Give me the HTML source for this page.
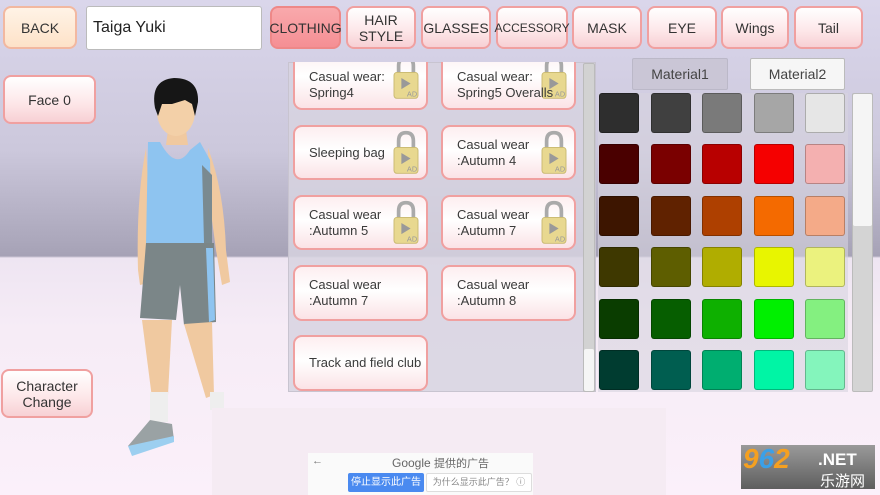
<!DOCTYPE html>
<html><head><meta charset="utf-8"><style>
*{margin:0;padding:0;box-sizing:border-box}
body{width:880px;height:495px;overflow:hidden;position:relative;font-family:"Liberation Sans","Noto Sans CJK SC",sans-serif;color:#333;
background:linear-gradient(#dad6eb 0px,#ccc8dc 150px,#a6a2b6 256px,#eee5f2 258px,#f6ecf6 330px,#fbf0fa 495px)}
.a{position:absolute}
.btn{position:absolute;border:2px solid #f0a0a0;border-radius:8px;background:linear-gradient(#fff 0%,#fde6e8 60%,#f7d0d4 100%);display:flex;align-items:center;justify-content:center;text-align:center;font-size:14px;line-height:16px;color:#333}
.tab{top:6px;height:43px;font-size:14px}
.cl{position:absolute;width:135px;border:2px solid #f0a0a0;border-radius:9px;background:linear-gradient(#fdeef0,#fff 45%,#fbe3e6);font-size:13px;line-height:16px;padding-left:14px;display:flex;align-items:center;color:#3a3a3a;white-space:nowrap}
.cl span{position:relative;z-index:2}
.sw{position:absolute;width:40px;height:40px;border-radius:3px;border:1px solid rgba(0,0,0,.25)}
.lock{position:absolute;right:6px;top:2px;width:28px;height:48px;z-index:1}
</style></head><body>
<div class="btn" style="left:3px;top:6px;width:74px;height:43px;background:linear-gradient(#fff3e6,#fde2c8);border-color:#f2b8a0">BACK</div>
<div class="a" style="left:86px;top:6px;width:176px;height:44px;background:#fff;border:1px solid #bbb;border-radius:3px;font-size:16px;line-height:42px;padding-left:6px;color:#222">Taiga Yuki</div>
<div class="btn tab" style="left:270px;width:71px;background:linear-gradient(#f9a9ac,#f58f94);border-color:#e88">CLOTHING</div>
<div class="btn tab" style="left:346px;width:70px">HAIR<br>STYLE</div>
<div class="btn tab" style="left:421px;width:70px">GLASSES</div>
<div class="btn tab" style="left:496px;width:72px;font-size:12px">ACCESSORY</div>
<div class="btn tab" style="left:572px;width:70px">MASK</div>
<div class="btn tab" style="left:647px;width:70px">EYE</div>
<div class="btn tab" style="left:721px;width:68px">Wings</div>
<div class="btn tab" style="left:794px;width:69px">Tail</div>
<div class="btn" style="left:3px;top:75px;width:93px;height:49px">Face 0</div>
<div class="btn" style="left:1px;top:369px;width:92px;height:49px">Character<br>Change</div>

<svg class="a" style="left:100px;top:70px" width="140" height="395" viewBox="100 70 140 395">
<path d="M168 130 L186 130 L188 145 L166 145Z" fill="#f0c9a0"/>
<path d="M146 148 Q136 200 138 270 L140 285 L148 283 L150 215 Z" fill="#f0c9a0"/>
<path d="M208 148 Q224 190 226 250 L230 282 L222 285 L216 250 L210 205Z" fill="#f0c9a0"/>
<path d="M148 142 L160 142 Q176 172 190 150 L200 142 L210 160 L212 243 L146 244 Z" fill="#8ec4f0"/>
<path d="M202 165 L212 175 L212 243 L204 243Z" fill="#7a8a90"/>
<path d="M146 243 L214 243 L216 322 L184 325 L180 285 L176 320 L140 318 Z" fill="#7b8688"/>
<path d="M206 248 L213 248 L215 320 L209 322Z" fill="#8ec4f0"/>
<path d="M142 320 L172 320 L168 395 L152 398Z" fill="#f0c9a0"/>
<path d="M184 324 L212 322 L214 395 L206 398Z" fill="#f0c9a0"/>
<rect x="150" y="392" width="18" height="30" fill="#eee"/>
<rect x="210" y="392" width="14" height="18" fill="#eee"/>
<path d="M150 420 L172 424 L174 440 L133 452 L128 446Z" fill="#9aa2a4"/>
<path d="M128 446 L174 436 L174 442 L132 456Z" fill="#9ccff0"/>
<ellipse cx="176" cy="112" rx="19" ry="24" fill="#f3d0a8"/>
<path d="M155 108 Q150 80 174 78 Q199 78 198 102 L195 116 L192 104 L185 100 L172 104 L162 104 L158 116Z" fill="#161616"/>
</svg>

<div class="a" style="left:288px;top:62px;width:308px;height:330px;background:rgba(215,212,224,.85);border:1px solid #c8c4d0"></div>
<div class="a" style="left:583px;top:63px;width:12px;height:329px;background:#d2d2d2;border:1px solid #bbb;border-radius:2px"></div>
<div class="a" style="left:584px;top:349px;width:10px;height:42px;background:#f5f5f5;border-radius:2px"></div>
<div class="a" style="left:288px;top:62px;width:296px;height:330px;overflow:hidden">
 <div class="cl" style="left:5px;top:-14px;height:62px;padding-top:12px"><span>Casual wear:<br>Spring4</span><svg class="lock" style="top:4px" viewBox="0 0 30 52"><path d="M7 22 V13 Q7 4 15 4 Q23 4 23 13 V22" fill="none" stroke="#aaa" stroke-width="4"/><rect x="2" y="20" width="26" height="28" rx="3" fill="#e8d890" stroke="#c8b870"/><path d="M10 26 L20 32 L10 38Z" fill="#999"/><text x="16" y="46" font-size="8" fill="#999">AD</text></svg></div>
 <div class="cl" style="left:153px;top:-14px;height:62px;padding-top:12px"><span>Casual wear:<br>Spring5 Overalls</span><svg class="lock" style="top:4px" viewBox="0 0 30 52"><path d="M7 22 V13 Q7 4 15 4 Q23 4 23 13 V22" fill="none" stroke="#aaa" stroke-width="4"/><rect x="2" y="20" width="26" height="28" rx="3" fill="#e8d890" stroke="#c8b870"/><path d="M10 26 L20 32 L10 38Z" fill="#999"/><text x="16" y="46" font-size="8" fill="#999">AD</text></svg></div>
 <div class="cl" style="left:5px;top:63px;height:55px"><span>Sleeping bag</span><svg class="lock" viewBox="0 0 30 52"><path d="M7 22 V13 Q7 4 15 4 Q23 4 23 13 V22" fill="none" stroke="#aaa" stroke-width="4"/><rect x="2" y="20" width="26" height="28" rx="3" fill="#e8d890" stroke="#c8b870"/><path d="M10 26 L20 32 L10 38Z" fill="#999"/><text x="16" y="46" font-size="8" fill="#999">AD</text></svg></div>
 <div class="cl" style="left:153px;top:63px;height:55px"><span>Casual wear<br>:Autumn 4</span><svg class="lock" viewBox="0 0 30 52"><path d="M7 22 V13 Q7 4 15 4 Q23 4 23 13 V22" fill="none" stroke="#aaa" stroke-width="4"/><rect x="2" y="20" width="26" height="28" rx="3" fill="#e8d890" stroke="#c8b870"/><path d="M10 26 L20 32 L10 38Z" fill="#999"/><text x="16" y="46" font-size="8" fill="#999">AD</text></svg></div>
 <div class="cl" style="left:5px;top:133px;height:55px"><span>Casual wear<br>:Autumn 5</span><svg class="lock" viewBox="0 0 30 52"><path d="M7 22 V13 Q7 4 15 4 Q23 4 23 13 V22" fill="none" stroke="#aaa" stroke-width="4"/><rect x="2" y="20" width="26" height="28" rx="3" fill="#e8d890" stroke="#c8b870"/><path d="M10 26 L20 32 L10 38Z" fill="#999"/><text x="16" y="46" font-size="8" fill="#999">AD</text></svg></div>
 <div class="cl" style="left:153px;top:133px;height:55px"><span>Casual wear<br>:Autumn 7</span><svg class="lock" viewBox="0 0 30 52"><path d="M7 22 V13 Q7 4 15 4 Q23 4 23 13 V22" fill="none" stroke="#aaa" stroke-width="4"/><rect x="2" y="20" width="26" height="28" rx="3" fill="#e8d890" stroke="#c8b870"/><path d="M10 26 L20 32 L10 38Z" fill="#999"/><text x="16" y="46" font-size="8" fill="#999">AD</text></svg></div>
 <div class="cl" style="left:5px;top:203px;height:56px">Casual wear<br>:Autumn 7</div>
 <div class="cl" style="left:153px;top:203px;height:56px">Casual wear<br>:Autumn 8</div>
 <div class="cl" style="left:5px;top:273px;height:56px;overflow:hidden">Track and field club</div>
</div>

<div class="a" style="left:632px;top:58px;width:96px;height:32px;background:#cac6d6;border:1px solid #bbb8c8;border-radius:2px;font-size:14px;text-align:center;line-height:30px;color:#444">Material1</div>
<div class="a" style="left:750px;top:58px;width:95px;height:32px;background:#f6f6f6;border:1px solid #bbb;border-radius:2px;font-size:14px;text-align:center;line-height:30px;color:#444">Material2</div>
<div class="a" style="left:598px;top:93px;width:250px;height:299px;background:rgba(215,212,224,.6)"></div>
<div class="a" style="left:852px;top:93px;width:21px;height:299px;background:#d4d4d4;border:1px solid #bbb;border-radius:2px"></div>
<div class="a" style="left:853px;top:94px;width:19px;height:132px;background:#f5f5f5;border-radius:2px"></div>

<div class="sw" style="left:599px;top:93px;background:#2e2e2e"></div><div class="sw" style="left:651px;top:93px;background:#404040"></div><div class="sw" style="left:702px;top:93px;background:#7a7a7a"></div><div class="sw" style="left:754px;top:93px;background:#a6a6a6"></div><div class="sw" style="left:805px;top:93px;background:#e6e6e6"></div>
<div class="sw" style="left:599px;top:144px;background:#4a0000"></div><div class="sw" style="left:651px;top:144px;background:#7a0000"></div><div class="sw" style="left:702px;top:144px;background:#b80000"></div><div class="sw" style="left:754px;top:144px;background:#f50000"></div><div class="sw" style="left:805px;top:144px;background:#f4b0b0"></div>
<div class="sw" style="left:599px;top:196px;background:#3d1500"></div><div class="sw" style="left:651px;top:196px;background:#602200"></div><div class="sw" style="left:702px;top:196px;background:#ae4000"></div><div class="sw" style="left:754px;top:196px;background:#f46a00"></div><div class="sw" style="left:805px;top:196px;background:#f4aa88"></div>
<div class="sw" style="left:599px;top:247px;background:#3e3800"></div><div class="sw" style="left:651px;top:247px;background:#5e5e00"></div><div class="sw" style="left:702px;top:247px;background:#b0ad00"></div><div class="sw" style="left:754px;top:247px;background:#e8f500"></div><div class="sw" style="left:805px;top:247px;background:#ebf27e"></div>
<div class="sw" style="left:599px;top:299px;background:#0a3d00"></div><div class="sw" style="left:651px;top:299px;background:#065e00"></div><div class="sw" style="left:702px;top:299px;background:#0eb000"></div><div class="sw" style="left:754px;top:299px;background:#00f000"></div><div class="sw" style="left:805px;top:299px;background:#84f080"></div>
<div class="sw" style="left:599px;top:350px;background:#003c30"></div><div class="sw" style="left:651px;top:350px;background:#005e50"></div><div class="sw" style="left:702px;top:350px;background:#00ae70"></div><div class="sw" style="left:754px;top:350px;background:#00f5a5"></div><div class="sw" style="left:805px;top:350px;background:#84f5bc"></div>

<div class="a" style="left:212px;top:408px;width:454px;height:87px;background:#f5ebf3"></div>
<div class="a" style="left:308px;top:453px;width:225px;height:42px;background:#fafafa"></div>
<div class="a" style="left:312px;top:455px;font-size:11px;color:#777">←</div>
<div class="a" style="left:392px;top:455px;font-size:12px;color:#666">Google <span style="font-size:11px">提供的广告</span></div>
<div class="a" style="left:348px;top:473px;width:76px;height:19px;background:#4a8af0;border-radius:2px;color:#fff;font-size:10px;line-height:19px;text-align:center">停止显示此广告</div>
<div class="a" style="left:426px;top:473px;width:106px;height:19px;background:#fff;border:1px solid #ddd;border-radius:2px;color:#888;font-size:9px;line-height:17px;text-align:center">为什么显示此广告？ ⓘ</div>

<div class="a" style="left:741px;top:445px;width:134px;height:44px;background:linear-gradient(#9a9a9a,#5e5e5e);"></div>
<div class="a" style="left:743px;top:443px;font-size:28px;font-weight:bold;font-style:italic;color:#f5a020;letter-spacing:0px">9<span style="color:#3aa0e8">6</span>2</div>
<div class="a" style="left:818px;top:450px;font-size:17px;color:#fff;font-weight:bold">.NET</div>
<div class="a" style="left:820px;top:470px;font-size:15px;color:#fff">乐游网</div>
</body></html>
